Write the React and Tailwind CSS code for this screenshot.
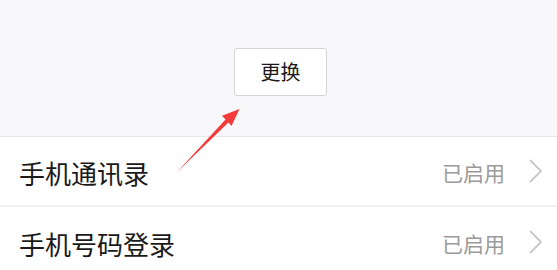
import React from 'react';

const ROWS = [
  { label: '手机通讯录', status: '已启用' },
  { label: '手机号码登录', status: '已启用' },
];

const Chevron = () => (
  <svg width="14" height="24" viewBox="0 0 14 24" fill="none" className="shrink-0">
    <path d="M1.5 1.5 L12 12 L1.5 22.5" stroke="#c8c8c8" strokeWidth="1.8" strokeLinecap="round" strokeLinejoin="round" />
  </svg>
);

const Arrow = () => (
  <svg className="absolute left-0 top-0 pointer-events-none" width="557" height="270" viewBox="0 0 557 270">
    <polygon
      points="177,172 225.5,119.5 222,115.7 239.5,109 231.5,126 228.5,122.5"
      fill="#f23b3b"
    />
  </svg>
);

const App = () => {
  return (
    <div className="relative w-[557px] h-[270px] overflow-hidden bg-white font-['Noto_Sans_CJK_SC','Noto_Sans',sans-serif]">
      {/* top area with button */}
      <div className="h-[137px] bg-[#f8f8fa] border-b border-[#e6e6e8] pt-[48px] pl-[234px]">
        <button className="w-[93px] h-[48px] bg-white border border-[#d6d6d9] rounded-[3px] text-[20px] text-[#1a1a1a] flex items-center justify-center">
          更换
        </button>
      </div>

      {/* list */}
      <div className="flex flex-col">
        {ROWS.map((row, i) => (
          <div key={i} className={`h-[70px] flex items-center pl-[19px] pr-[14px] ${i === 0 ? 'border-b-2 border-[#efefef]' : ''}`}>
            <span className="flex-1 text-[26px] text-[#1a1a1a] leading-none pt-[3px]">{row.label}</span>
            <span className="text-[21px] text-[#9a9a9a] leading-none pt-[2px] mr-[24px]">{row.status}</span>
            <Chevron />
          </div>
        ))}
      </div>

      <Arrow />
    </div>
  );
};

export default App;
